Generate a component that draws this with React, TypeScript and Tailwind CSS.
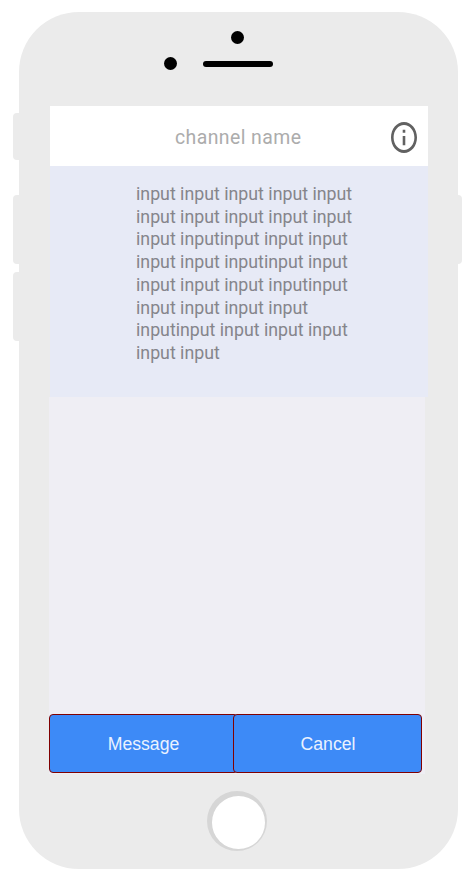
const MESSAGE_LINES = [
  "input input input input input",
  "input input input input input",
  "input inputinput input input",
  "input input inputinput input",
  "input input input inputinput",
  "input input input input",
  "inputinput input input input",
  "input input",
];

function InfoIcon() {
  return (
    <svg viewBox="2 2 20 20" preserveAspectRatio="none" className="mt-0.5 h-[31px] w-[26px]" fill="#616161">
      <path d="M11 17h2v-6h-2v6zm1-15C6.48 2 2 6.48 2 12s4.48 10 10 10 10-4.48 10-10S17.52 2 12 2zm0 18c-4.41 0-8-3.59-8-8s3.59-8 8-8 8 3.59 8 8-3.59 8-8 8zM11 9h2V7h-2v2z" />
    </svg>
  );
}

function Speaker() {
  return (
    <div className="flex h-[94px] flex-col pt-[19px]">
      <div className="ml-[212.7px] size-[13px] rounded-full bg-black" />
      <div className="mt-[13px] flex items-center">
        <div className="ml-[145px] size-[13px] rounded-full bg-black" />
        <div className="ml-[26px] h-1.5 w-[70px] rounded-full bg-black" />
      </div>
    </div>
  );
}

function Screen() {
  return (
    <main className="ml-[30.2px] flex h-[668px] w-[380px] flex-col">
      <header className="ml-px flex h-[60px] w-[378px] items-center bg-white">
        <h1 className="ml-[125px] w-[216px] origin-left scale-x-[0.925] pt-[3px] text-[21px] tracking-[0.45px] text-[#acacac]">channel name</h1>
        <InfoIcon />
      </header>
      <section className="ml-px h-[231px] w-[378.3px] bg-[#e7eaf6] pl-[86px] pt-[16.8px] text-[18.5px] leading-[22.75px] text-[#85858b]">
        {MESSAGE_LINES.map((line, i) => (
          <p key={i} className="origin-left scale-x-[0.96] whitespace-nowrap">{line}</p>
        ))}
      </section>
      <div className="flex w-[376.5px] grow flex-col justify-end bg-[#efeef4] pb-px">
        <div className="flex font-['Liberation_Sans',Arial,sans-serif] text-[18px] text-[#eaf2ff]">
          <button className="h-[59px] w-[189px] rounded-[4px] border border-[#800000] bg-[#3d8af7]"><span className="inline-block scale-x-[0.98] scale-y-[1.05] pl-px pt-px">Message</span></button>
          <button className="-ml-[5px] h-[59px] w-[189px] rounded-[4px] border border-[#800000] bg-[#3d8af7]"><span className="inline-block scale-x-[0.98] scale-y-[1.05] pl-0.5 pt-px">Cancel</span></button>
        </div>
      </div>
    </main>
  );
}

export default function App() {
  return (
    <div className="flex h-[881px] w-[473px] overflow-hidden bg-white pl-[12.5px] pt-3 font-['Roboto',sans-serif]">
      <div className="flex w-[6.3px] flex-col pt-[101.4px]">
        <div className="h-[46.5px] rounded-l bg-[#ebebeb]" />
        <div className="mt-[35px] h-[69px] rounded-l bg-[#ebebeb]" />
        <div className="mt-[8px] h-[69px] rounded-l bg-[#ebebeb]" />
      </div>
      <div className="h-[857.3px] w-[439.5px] shrink-0 rounded-[60px] bg-[#ebebeb]">
        <Speaker />
        <Screen />
        <div className="ml-[188px] mt-[16.6px] size-[60px] rounded-full bg-[#d6d6d6] pl-[4.8px] pt-[5px]">
          <div className="size-[53px] rounded-full bg-white" />
        </div>
      </div>
      <div className="mt-[183px] h-[69px] w-[3.7px] rounded-r bg-[#ebebeb]" />
    </div>
  );
}
